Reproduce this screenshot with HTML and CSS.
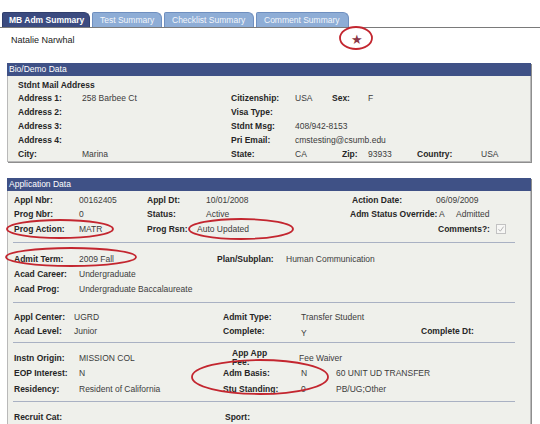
FILE: index.html
```html
<!DOCTYPE html>
<html>
<head>
<meta charset="utf-8">
<link rel="stylesheet" href="styles.css">
</head>
<body>
<div class="tabs">
  <div class="tab active t1">MB Adm Summary</div>
  <div class="tab t2">Test Summary</div>
  <div class="tab t3">Checklist Summary</div>
  <div class="tab t4">Comment Summary</div>
</div>
<div class="namebar"><span class="name">Natalie Narwhal</span><span class="star">★</span></div>

<section class="box bio">
  <div class="hdr">Bio/Demo Data</div>
  <div class="body">
    <div class="row first"><span class="lbl">Stdnt Mail Address</span></div>
    <div class="row"><span class="lbl w64">Address 1:</span><span class="val w149">258 Barbee Ct</span><span class="lbl w64">Citizenship:</span><span class="val w37">USA</span><span class="lbl w36">Sex:</span><span class="val">F</span></div>
    <div class="row"><span class="lbl w64">Address 2:</span><span class="val w149"></span><span class="lbl w64">Visa Type:</span></div>
    <div class="row"><span class="lbl w64">Address 3:</span><span class="val w149"></span><span class="lbl w64">Stdnt Msg:</span><span class="val">408/942-8153</span></div>
    <div class="row"><span class="lbl w64">Address 4:</span><span class="val w149"></span><span class="lbl w64">Pri Email:</span><span class="val">cmstesting@csumb.edu</span></div>
    <div class="row"><span class="lbl w64">City:</span><span class="val w149">Marina</span><span class="lbl w64">State:</span><span class="val w47">CA</span><span class="lbl w26">Zip:</span><span class="val w49">93933</span><span class="lbl w64">Country:</span><span class="val">USA</span></div>
  </div>
</section>

<section class="box app">
  <div class="hdr">Application Data</div>
  <div class="body">
    <div class="grp g1">
      <div class="row"><span class="lbl w65">Appl Nbr:</span><span class="val w68">00162405</span><span class="lbl w59">Appl Dt:</span><span class="val w146">10/01/2008</span><span class="lbl w84">Action Date:</span><span class="val">06/09/2009</span></div>
      <div class="row"><span class="lbl w65">Prog Nbr:</span><span class="val w68">0</span><span class="lbl w59">Status:</span><span class="val w144">Active</span><span class="lbl w89">Adm Status Override:</span><span class="val w17">A</span><span class="val">Admitted</span></div>
      <div class="row tall"><span class="lbl w65">Prog Action:</span><span class="val w68">MATR</span><span class="lbl w50">Prog Rsn:</span><span class="val w241">Auto Updated</span><span class="lbl w58">Comments?:</span>
        <svg class="chk" width="10" height="10" viewBox="0 0 10 10"><rect x="0.5" y="0.5" width="9" height="9" fill="#f7f7f5" stroke="#c2c2c2"/><path d="M2.5 5.2 L4.3 7.2 L7.6 2.6" fill="none" stroke="#b4b4b4" stroke-width="1"/></svg>
      </div>
    </div>
    <div class="grp g2">
      <div class="row r15"><span class="lbl w65">Admit Term:</span><span class="val w138">2009 Fall</span><span class="lbl w69">Plan/Subplan:</span><span class="val">Human Communication</span></div>
      <div class="row r15"><span class="lbl w65">Acad Career:</span><span class="val">Undergraduate</span></div>
      <div class="row r15"><span class="lbl w65">Acad Prog:</span><span class="val">Undergraduate Baccalaureate</span></div>
    </div>
    <div class="grp g3">
      <div class="row"><span class="lbl w60">Appl Center:</span><span class="val w149">UGRD</span><span class="lbl w78">Admit Type:</span><span class="val">Transfer Student</span></div>
      <div class="row"><span class="lbl w60">Acad Level:</span><span class="val w149">Junior</span><span class="lbl w78">Complete:</span><span class="val w120 low">Y</span><span class="lbl">Complete Dt:</span></div>
    </div>
    <div class="grp g4">
      <div class="row r15"><span class="lbl w65">Instn Origin:</span><span class="val w153">MISSION COL</span><span class="lbl w67"><span class="wrap">App App Fee:</span></span><span class="val">Fee Waiver</span></div>
      <div class="row r16"><span class="lbl w65">EOP Interest:</span><span class="val w144">N</span><span class="lbl w78">Adm Basis:</span><span class="val w35">N</span><span class="val">60 UNIT UD TRANSFER</span></div>
      <div class="row r15"><span class="lbl w65">Residency:</span><span class="val w144">Resident of California</span><span class="lbl w78">Stu Standing:</span><span class="val w35">0</span><span class="val">PB/UG;Other</span></div>
    </div>
    <div class="grp g5">
      <div class="row"><span class="lbl w65">Recruit Cat:</span><span class="val w146"></span><span class="lbl">Sport:</span></div>
    </div>
  </div>
</section>

<svg class="marks" width="540" height="424" viewBox="0 0 540 424">
  <ellipse cx="356" cy="38" rx="16" ry="11"/>
  <ellipse cx="60" cy="229" rx="53" ry="9"/>
  <ellipse cx="241" cy="229" rx="52" ry="10"/>
  <ellipse cx="71" cy="257" rx="65" ry="9"/>
  <ellipse cx="260" cy="377" rx="68" ry="17"/>
</svg>
</body>
</html>
```

FILE: styles.css
```css
* { box-sizing: border-box; }

html, body { margin: 0; padding: 0; }

body {
  width: 540px;
  height: 424px;
  overflow: hidden;
  position: relative;
  background: #ffffff;
  font-family: "Liberation Sans", Arial, sans-serif;
  font-size: 8.5px;
  color: #333;
}

/* tabs */
.tabs {
  display: flex;
  gap: 2px;
  height: 28px;
  padding: 12px 0 0 2px;
  border-bottom: 1px solid #7a7a7a;
}
.tab {
  height: 15px;
  line-height: 15px;
  padding-left: 7px;
  white-space: nowrap;
  background: #8eadd6;
  color: #f3f6fb;
  border: 1px solid #6f8fbf;
  border-bottom: none;
  border-radius: 2px 6px 0 0;
}
.tab.active {
  background: #3b4b80;
  border-color: #2f3e6c;
  color: #fff;
  font-weight: bold;
  padding-left: 6px;
}
.t1 { width: 88px; }
.t2 { width: 70px; }
.t3 { width: 90px; }
.t4 { width: 93px; }

/* name line */
.namebar {
  display: flex;
  align-items: center;
  height: 35px;
  padding: 0 0 12px 11px;
  color: #222;
  font-size: 9px;
}
.name { width: 340px; }
.star {
  font-family: "DejaVu Sans", sans-serif;
  font-size: 13px;
  line-height: 13px;
  color: #8c3646;
}

/* group boxes */
.box {
  margin-left: 7px;
  width: 524px;
  background: #eff0eb;
  border: 1px solid #b9b9b9;
  border-top: none;
  box-shadow: 1px 1px 0 #8e8e8e;
}
.hdr {
  margin: 0 -1px;
  height: 13px;
  line-height: 13px;
  padding-left: 2px;
  background: #3f5186;
  color: #fff;
}

.bio .body { padding: 2px 0 0 10px; }
.bio .row { height: 14px; }
.bio .row.first { height: 13px; }

.app { margin-top: 16px; height: 260px; }
.app .body { padding: 0 15px 0 5px; }

.grp { padding-left: 1px; border-top: 1px solid #a9b1c3; }
.g1 { border-top: none; padding-top: 2px; padding-bottom: 5px; }
.g2 { padding-top: 8px; padding-bottom: 6px; }
.g3 { padding-top: 7px; padding-bottom: 4px; }
.g4 { padding-top: 7px; padding-bottom: 5px; }
.g5 { padding-top: 8px; }

.row {
  display: flex;
  align-items: center;
  height: 14px;
  white-space: nowrap;
}
.row.tall { height: 16px; }
.row.r15 { height: 15px; }
.row.r16 { height: 16px; }

.lbl { font-weight: bold; color: #262626; }
.val { color: #3c3c3c; }
.low { position: relative; top: 2px; }

.wrap {
  display: block;
  width: 40px;
  white-space: normal;
  line-height: 9px;
}

.chk { display: block; }

.w17 { width: 17px; }
.w26 { width: 26px; }
.w35 { width: 35px; }
.w36 { width: 36px; }
.w37 { width: 37px; }
.w47 { width: 47px; }
.w49 { width: 49px; }
.w50 { width: 50px; }
.w58 { width: 58px; }
.w59 { width: 59px; }
.w60 { width: 60px; }
.w64 { width: 64px; }
.w65 { width: 65px; }
.w67 { width: 67px; }
.w68 { width: 68px; }
.w69 { width: 69px; }
.w78 { width: 78px; }
.w84 { width: 84px; }
.w89 { width: 89px; }
.w120 { width: 120px; }
.w138 { width: 138px; }
.w144 { width: 144px; }
.w146 { width: 146px; }
.w149 { width: 149px; }
.w153 { width: 153px; }
.w241 { width: 241px; }

/* hand-drawn annotation ellipses over the page */
.marks {
  position: absolute;
  left: 0;
  top: 0;
  pointer-events: none;
}
.marks ellipse {
  fill: none;
  stroke: #c3262f;
  stroke-width: 1.8;
}
```
